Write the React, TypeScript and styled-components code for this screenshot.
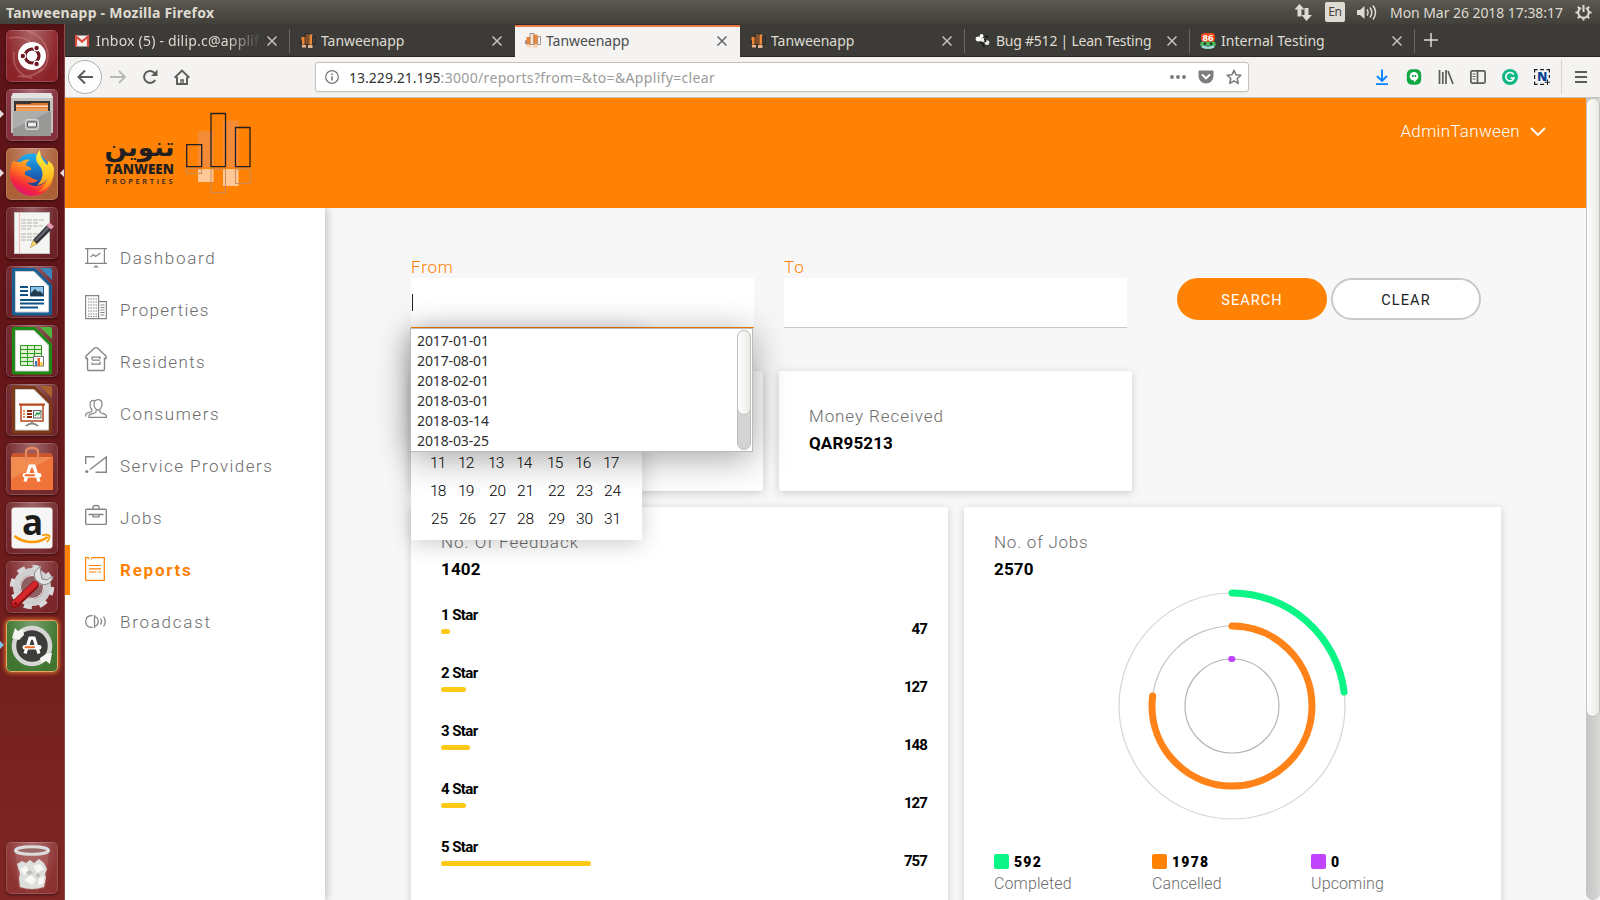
import React from 'react';
import styled, { createGlobalStyle, css } from 'styled-components';

const uiFont = '"Noto Sans", "Open Sans", sans-serif';
const pageFont = 'Roboto, "Liberation Sans", sans-serif';
const orange = '#ff8205';

const GlobalStyle = createGlobalStyle`
  * { box-sizing: border-box; }
  body { margin: 0; overflow: hidden; background: #f7f7f7; }
  svg { display: block; flex: none; }
`;

const Desktop = styled.div`
  width: 1600px;
  height: 900px;
  display: flex;
  flex-direction: column;
  overflow: hidden;
  font-family: ${uiFont};
`;

/* ---------- system panel ---------- */

const Panel = styled.div`
  height: 24px;
  flex: none;
  display: flex;
  align-items: center;
  padding: 0 8px 0 6px;
  background: linear-gradient(#5f5d52 0, #57554c 3px, #403f3a 24px);
  color: #dfdbd2;
  font-size: 14px;
  line-height: 23px;
  white-space: nowrap;
`;

const PanelTitle = styled.div`
  flex: 1;
  font-weight: 700;
  letter-spacing: 0.24px;
`;

const Indicators = styled.div`
  display: flex;
  align-items: center;
`;

const Keyboard = styled.div`
  width: 20px;
  height: 20px;
  margin: 0 12px;
  border-radius: 2px;
  background: #dfdbd2;
  color: #45443f;
  font-size: 12px;
  line-height: 20px;
  letter-spacing: -0.4px;
  text-align: center;
`;

const Clock = styled.div`
  width: 174px;
  margin: 0 11px 0 13px;
  letter-spacing: -0.06px;
`;

const Below = styled.div`
  flex: 1;
  display: flex;
  min-height: 0;
`;

/* ---------- launcher ---------- */

const LauncherBar = styled.div`
  width: 65px;
  flex: none;
  display: flex;
  flex-direction: column;
  align-items: flex-start;
  gap: 7px;
  padding: 6px 0 6px 6px;
  border-right: 1px solid #8d4a4b;
  background: linear-gradient(#4e1013 0, #5c1317 8px, #641518 35%, #74201f 75%, #7f2723 100%);
`;

const Tile = styled.div<{ $bg: string; $glow?: boolean; $last?: boolean }>`
  position: relative;
  width: 52px;
  height: 52px;
  flex: none;
  border-radius: 5px;
  background: radial-gradient(ellipse at 50% 0, rgba(255, 255, 255, 0.3), rgba(255, 255, 255, 0) 75%), ${p => p.$bg};
  box-shadow: inset 0 0 0 1px rgba(255, 255, 255, 0.16), 0 1px 3px rgba(0, 0, 0, 0.5);
  ${p => p.$glow && css`box-shadow: inset 0 0 0 1px #e8a868, 0 0 4px 1px #e07830;`}
  ${p => p.$last && css`margin-top: auto;`}
`;

const Pip = styled.i<{ $side: 'left' | 'right'; $color: string }>`
  position: absolute;
  top: 21px;
  ${p => (p.$side === 'left' ? 'left: -6px;' : 'right: -6px;')}
  border: 4.5px solid transparent;
  ${p => (p.$side === 'left'
    ? css`border-left-color: ${p.$color}; border-right-width: 0;`
    : css`border-right-color: ${p.$color}; border-left-width: 0;`)}
`;

const DocIcon = ({ edge, fold, children }: { edge: string; fold: string; children: React.ReactNode }) => (
  <svg width="52" height="52" viewBox="0 0 52 52">
    <path d="M8 2h21l17 17v28.500q0 2-2 2H8q-2 0-2-2V4q0-2 2-2z" fill={edge} />
    <path d="M9.500 5.500h18.500l14.500 14.500v26H9.500z" fill="#fff" stroke="#cfcfcf" />
    <path d="M34 2h10q2 0 2 2v10z" fill={fold} />
    {children}
  </svg>
);

const UbuntuIcon = () => (
  <svg width="52" height="52" viewBox="0 0 52 52" fill="none">
    <path d="M3 8c10-2 18 0 22 5M14 0c12 0 26 8 28 24M42 24c0 12-6 18-14 20M8 22c-2 12 4 24 18 26M36 38c-6 8-16 10-24 8" stroke="#d98d90" strokeOpacity=".45" strokeWidth="1.500" />
    <circle cx="26" cy="26" r="14" fill="#fff" />
    <circle cx="26" cy="26" r="7" stroke="#6b1a1f" strokeWidth="3.200" />
    <g fill="#6b1a1f" stroke="#fff" strokeWidth="1.200">
      <circle cx="16.800" cy="26" r="2.800" /><circle cx="30.600" cy="18" r="2.800" /><circle cx="30.600" cy="34" r="2.800" />
    </g>
  </svg>
);

const FilesIcon = () => (
  <svg width="52" height="52" viewBox="0 0 52 52">
    <path d="M7 4h38l2 4v36H5V8z" fill="#c2c2c1" />
    <path d="M7 4h38l2 5H5z" fill="#e3e3e2" />
    <rect x="8" y="12" width="36" height="11" fill="#3a3432" />
    <path d="M10 15h14l2-1h16v10H10z" fill="#e0772d" />
    <rect x="10" y="16.500" width="32" height="1.500" fill="#fbe3c8" />
    <rect x="10" y="19" width="32" height="4" fill="#f0a05c" />
    <path d="M7 22h38v25H7z" fill="#989897" />
    <path d="M7 22h38L7 40z" fill="#adadac" />
    <rect x="19.500" y="30.500" width="13" height="10" rx="2" fill="#b4b4b3" stroke="#d6d6d5" />
    <rect x="21.500" y="33" width="9" height="5" rx="1" fill="#eee" stroke="#444" />
  </svg>
);

const FirefoxIcon = () => (
  <svg width="52" height="52" viewBox="0 0 52 52">
    <defs>
      <linearGradient id="fxBody" x1=".8" y1="0" x2=".2" y2="1">
        <stop offset="0" stopColor="#ffd42e" /><stop offset=".45" stopColor="#ff7a1c" /><stop offset=".75" stopColor="#f5233f" /><stop offset="1" stopColor="#d6118e" />
      </linearGradient>
      <linearGradient id="fxGlobe" x1="0" y1="0" x2="0" y2="1">
        <stop offset="0" stopColor="#1fb0f2" /><stop offset="1" stopColor="#17348f" />
      </linearGradient>
      <linearGradient id="fxTail" x1=".5" y1="0" x2=".5" y2="1">
        <stop offset="0" stopColor="#fff44a" /><stop offset=".6" stopColor="#ffc21f" /><stop offset="1" stopColor="#ff7a1c" />
      </linearGradient>
    </defs>
    <circle cx="26" cy="23" r="17.500" fill="url(#fxGlobe)" />
    <path d="M7 13c-4 8-4.500 17 1 25 8 12 25 13 34 3 4-5 6-11 5-18-3 6-6 10-9 12-5 4-13 4-17-1 4 2 8 1 11-2-5 0-8-4-13-5-1-3 1-5 6-5 1-2-2-4-5-4 0-3 1-5 4-6-4-1-7 0-9 2-3 0-6 0-8-1z" fill="url(#fxBody)" />
    <path d="M34 2c-5 6-5 10-1 15 5 6 5 14-2 20 8-1 12-6 11-13-1 10-3 16-10 20 10-2 16-11 16-22 0-5-3-8-6-9 0 2 0 3-1 4-4-5-7-8-7-15z" fill="url(#fxTail)" />
  </svg>
);

const GeditIcon = () => (
  <svg width="52" height="52" viewBox="0 0 52 52">
    <rect x="8.500" y="5.500" width="35" height="41" fill="#f4f4f2" stroke="#c4c4c0" />
    <path d="M13.500 6v40" stroke="#f2b9b9" />
    <path d="M15 13h24M15 16h18M15 19h22M15 22h10M15 27h22M15 30h18M15 33h12" stroke="#b2b2b0" strokeWidth="1" strokeDasharray="5 1" />
    <path d="M24 41l3-8 15-16 5 4-16 16z" fill="#34343a" />
    <path d="M24 41l3-8 4 4z" fill="#efd26a" />
    <path d="M29 33l14-15 2 1.500-15 15z" fill="#6a6a72" />
    <path d="M40.500 18.500l3-3 4.500 4-3 3z" fill="#e79bb5" />
  </svg>
);

const WriterIcon = () => (
  <DocIcon edge="#185f96" fold="#3b86bb">
    <path d="M14 21h8M14 25h8M14 29h8M14 34h24M14 37.500h24M14 41.500h18" stroke="#0e5286" strokeWidth="2" />
    <rect x="24.500" y="20.500" width="13" height="9.500" fill="#8cc4e8" stroke="#23577e" />
    <path d="M25 30v-3l4-4 3 3 2-1 3 3v2z" fill="#1f3b4d" />
  </DocIcon>
);

const CalcIcon = () => (
  <DocIcon edge="#1d8a14" fold="#4fb53f">
    <rect x="14" y="20" width="22" height="21" fill="#dff3d4" />
    <path d="M14.500 20.500h21v20h-21zM14 24.500h22M14 28.500h22M14 32.500h22M14 36.500h22M21.500 20v21M28.500 20v21" stroke="#2c9a1b" fill="none" />
    <rect x="27.500" y="31.500" width="10" height="9.500" fill="#fff" stroke="#777" />
    <rect x="29" y="36" width="2" height="5" fill="#2f7fc2" /><rect x="31.500" y="33" width="2.500" height="8" fill="#e8642a" /><rect x="34.500" y="37" width="2" height="4" fill="#f0c020" />
  </DocIcon>
);

const ImpressIcon = () => (
  <DocIcon edge="#7c3a17" fold="#a8612f">
    <path d="M13 20.500h26" stroke="#b5481c" strokeWidth="2" />
    <rect x="15" y="21" width="22" height="16" fill="#fff" stroke="#b5481c" strokeWidth="1.500" />
    <path d="M17 27h2M17 30h2M17 33h2" stroke="#e88b5a" strokeWidth="2" />
    <path d="M21 27h5M21 30h5M21 33h5" stroke="#8c2e10" strokeWidth="2" />
    <rect x="27.500" y="26.500" width="7.500" height="7.500" fill="#f2f2f2" stroke="#666" />
    <path d="M29 32l2-3 1.500 1.500 2-3" stroke="#1d9a3c" fill="none" strokeWidth="1.300" />
    <path d="M20 42q6-5 12 0M26 37v3" stroke="#888" fill="none" strokeWidth="2" />
  </DocIcon>
);

const SoftwareMark = ({ x, y }: { x: number; y: number }) => (
  <g transform={`translate(${x} ${y})`}>
    <path d="M2.500 18.500L7.500 3.200h4l5 15.300" fill="none" stroke="#fff" strokeWidth="3.200" />
    <rect x="0" y="10" width="19" height="4.600" rx="2.300" fill="#fff" />
    <rect x="2" y="11.300" width="10.500" height="2" rx="1" fill="#ee6a2a" />
  </g>
);

const SoftwareIcon = () => (
  <svg width="52" height="52" viewBox="0 0 52 52">
    <path d="M20 18V9q0-4 6-4t6 4v9" fill="none" stroke="#d8694a" strokeWidth="2.500" />
    <path d="M5 13l2-3h38l2 3v4H5z" fill="#c9562c" />
    <path d="M5 14h42v33H5z" fill="#ee743a" />
    <path d="M5 14h42L5 36z" fill="#f28b50" />
    <path d="M20 19V9q0-4 6-4t6 4v10" fill="none" stroke="#e58a63" strokeWidth="2" />
    <SoftwareMark x={16.500} y={20} />
  </svg>
);

const AmazonLetter = styled.text`
  font: 700 35px/1 "Open Sans", sans-serif;
  fill: #1c1c1c;
`;

const AmazonIcon = () => (
  <svg width="52" height="52" viewBox="0 0 52 52" overflow="visible">
    <rect x="5.500" y="5.500" width="41" height="41" rx="3" fill="#f6f6f6" />
    <AmazonLetter x="16" y="32.500">a</AmazonLetter>
    <path d="M8.500 34c9 7.500 24 8 33 1" fill="none" stroke="#f90" strokeWidth="2.600" />
    <path d="M36 33.500c3-1 6-1 7 0s0 4-2 6.500" fill="none" stroke="#f90" strokeWidth="1.800" />
  </svg>
);

const SettingsIcon = () => (
  <svg width="52" height="52" viewBox="0 0 52 52">
    <circle cx="26" cy="26" r="15.500" fill="none" stroke="#cfcfcf" strokeWidth="7" />
    <circle cx="26" cy="26" r="20" fill="none" stroke="#d8d8d8" strokeWidth="4.500" strokeDasharray="8 7.708" />
    <circle cx="26" cy="26" r="11.500" fill="#8f6063" stroke="#eee" />
    <path d="M28 26l7-8" stroke="#a9a9a9" strokeWidth="7" />
    <path d="M34 6c-6 3-7 9-4 13l5 4c5 2 11-1 12-8l-6 4-5-1-1-5z" fill="#e2e2e2" stroke="#888" />
    <path d="M9 43l20-19" stroke="#8e1014" strokeWidth="8" strokeLinecap="round" />
    <path d="M9 42l20-19" stroke="#d3262b" strokeWidth="5.500" strokeLinecap="round" />
    <circle cx="9.500" cy="42.500" r="1.500" fill="#7a0b0e" />
  </svg>
);

const UpdaterIcon = () => (
  <svg width="52" height="52" viewBox="0 0 52 52">
    <circle cx="26" cy="26" r="18" fill="#3c3c3a" stroke="#d6d6d4" strokeWidth="4.500" />
    <path d="M6 18l3-10 3 3 5-2 1 6-5 5z" fill="#f4f4f2" />
    <path d="M46 33l-2 11-4-3-5 2-1-5 6-4z" fill="#f4f4f2" />
    <SoftwareMark x={16.500} y={15} />
  </svg>
);

const TrashIcon = () => (
  <svg width="52" height="52" viewBox="0 0 52 52">
    <path d="M9 10l4 36q13 4 26 0l4-36z" fill="#b5706e" fillOpacity=".4" />
    <path d="M11 22l5-3 4 2 4-3 4 3 5-4 5 4 3 6-2 5 1 4-2 9q-12 4-24 0l-1-9 1-4z" fill="#dededc" />
    <path d="M14 27l6-3 3 5-5 4zM27 24l7-2 4 5-7 4zM18 38l7-5 5 5-4 5zM33 36l5-2-1 8-5 1z" fill="#f8f8f7" />
    <path d="M20 30l4-2 3 3-4 2zM30 32l3-1 1 4-3 1z" fill="#bcbcba" />
    <ellipse cx="26" cy="8.500" rx="16.500" ry="3.800" fill="#9a6a69" stroke="#dcdcda" strokeWidth="3" />
  </svg>
);

const launcherItems: { icon: React.ReactNode; bg: string; left?: string; right?: string; glow?: boolean; last?: boolean }[] = [
  { icon: <UbuntuIcon />, bg: '#8b2429' },
  { icon: <FilesIcon />, bg: '#842f3c', left: '#e4dcdc' },
  { icon: <FirefoxIcon />, bg: '#ad5f38', left: '#e4dcdc', right: '#e4dcdc' },
  { icon: <GeditIcon />, bg: '#6d2026' },
  { icon: <WriterIcon />, bg: '#6c2228' },
  { icon: <CalcIcon />, bg: '#6c2228' },
  { icon: <ImpressIcon />, bg: '#6e2428' },
  { icon: <SoftwareIcon />, bg: '#74292c' },
  { icon: <AmazonIcon />, bg: '#74282c' },
  { icon: <SettingsIcon />, bg: '#7c262b' },
  { icon: <UpdaterIcon />, bg: '#3f7530', left: '#7cc4e8', glow: true },
  { icon: <TrashIcon />, bg: '#8c3231', last: true },
];

const Launcher = () => (
  <LauncherBar>
    {launcherItems.map((it, i) => (
      <Tile key={i} $bg={it.bg} $glow={it.glow} $last={it.last}>
        {it.icon}
        {it.left && <Pip $side="left" $color={it.left} />}
        {it.right && <Pip $side="right" $color={it.right} />}
      </Tile>
    ))}
  </LauncherBar>
);

/* ---------- browser chrome ---------- */

const Browser = styled.div`
  flex: 1;
  min-width: 0;
  display: flex;
  flex-direction: column;
`;

const TabStrip = styled.div`
  height: 33px;
  flex: none;
  display: flex;
  background: #3c3b37;
  border-bottom: 1px solid #262523;
`;

const TabBox = styled.div<{ $active?: boolean; $divider?: boolean }>`
  position: relative;
  width: 225px;
  height: 33px;
  flex: none;
  display: flex;
  align-items: center;
  padding: 0 12px 0 10px;
  color: #dfdbd2;
  font-size: 14px;
  line-height: 20px;
  ${p => p.$active && css`
    background: #f4f3f2;
    color: #4c4c4c;
    border-top: 1px solid #2b2a27;
    box-shadow: inset 0 2px #f07746;
  `}
  ${p => p.$divider && css`
    &::after {
      content: '';
      position: absolute;
      right: 0;
      top: 5px;
      width: 1px;
      height: 24px;
      background: #6b6965;
    }
  `}
`;

const TabTitle = styled.div<{ $tracking: number; $fade?: boolean }>`
  width: 164px;
  margin: 0 6px 0 5px;
  overflow: hidden;
  white-space: nowrap;
  letter-spacing: ${p => p.$tracking}px;
  ${p => p.$fade && css`mask-image: linear-gradient(to right, #000 130px, transparent 166px);`}
`;

const NewTab = styled.div`
  display: flex;
  align-items: center;
  padding: 0 0 1px 9px;
`;

const TabClose = () => (
  <svg width="12" height="12" viewBox="0 0 12 12" stroke="currentColor" strokeWidth="1.500" opacity=".85">
    <path d="M1.500 1.500l9 9M10.500 1.500l-9 9" />
  </svg>
);

const GmailIcon = () => (
  <svg width="16" height="16" viewBox="0 0 16 16">
    <rect x="0" y="2.500" width="14" height="11" rx="1" fill="#f3efee" />
    <path d="M1 13.500V3.500l6 5 6-5v10" fill="none" stroke="#dd4b3e" strokeWidth="2.200" />
  </svg>
);

const TanweenIcon = ({ dark }: { dark?: boolean }) => (
  <svg width="16" height="16" viewBox="0 0 16 16">
    <rect x="1.500" y="4" width="4" height="7.500" fill="#ee8432" />
    <rect x="5.500" y="1" width="2.500" height="10.500" fill={dark ? '#8a5029' : '#f9e3d2'} />
    <rect x="8.300" y="1.500" width="4" height="10" fill="#f08a38" />
    <path d="M.5 7.500h1v3.500h-1zM5 .5h4v11H5zM12.500 3.500h3v8h-3z" fill="none" stroke={dark ? '#2a2724' : '#8d8079'} strokeWidth=".8" />
    <path d="M2 12h4v2.500H2zM8 12h4.500v3H8z" fill={dark ? '#e3b48e' : '#f9d5b8'} />
  </svg>
);

const BeeIcon = () => (
  <svg width="16" height="16" viewBox="0 0 16 16">
    <ellipse cx="3.600" cy="6" rx="3" ry="2.400" fill="#fff" />
    <ellipse cx="6.600" cy="3" rx="1.900" ry="1.900" fill="#fff" />
    <ellipse cx="7.800" cy="7" rx="2" ry="2" fill="#f2f2f2" />
    <circle cx="12" cy="9.700" r="2.400" fill="#e8e8e8" />
    <path d="M5.500 9.500l3 2M10 4.500l3-1.500M8.500 12l.5 2M9.500 6l1.500 3" stroke="#151515" strokeWidth="1.500" />
  </svg>
);

const BadgeText = styled.text`
  font: 700 9.500px/1 "Open Sans", sans-serif;
  fill: #fff;
`;

const FrogIcon = () => (
  <svg width="16" height="16" viewBox="0 0 16 16" overflow="visible">
    <ellipse cx="8" cy="11.300" rx="7.800" ry="4.600" fill="#4fb85c" />
    <ellipse cx="8" cy="14" rx="6.500" ry="1.800" fill="#a5dce8" />
    <path d="M3.500 11.500q4.500 3.500 9 0" stroke="#1f6d34" fill="none" />
    <circle cx="5" cy="10.500" r="1.200" fill="#173d1f" /><circle cx="11" cy="10.500" r="1.200" fill="#173d1f" />
    <rect x="1" y="0" width="14" height="8.800" rx="3.500" fill="#ee4a1c" />
    <BadgeText x="2.500" y="8">86</BadgeText>
  </svg>
);

const tabs = [
  { title: 'Inbox (5) - dilip.c@applify', icon: <GmailIcon />, divider: true, tracking: 0.21, fade: true },
  { title: 'Tanweenapp', icon: <TanweenIcon dark />, tracking: -0.04 },
  { title: 'Tanweenapp', icon: <TanweenIcon />, active: true, tracking: -0.04 },
  { title: 'Tanweenapp', icon: <TanweenIcon dark />, divider: true, tracking: -0.04 },
  { title: 'Bug #512 | Lean Testing', icon: <BeeIcon />, divider: true, tracking: -0.24 },
  { title: 'Internal Testing', icon: <FrogIcon />, divider: true, tracking: 0.03 },
];

const NavBar = styled.div`
  height: 41px;
  flex: none;
  display: flex;
  align-items: center;
  padding: 0 11px 0 3px;
  background: #f4f3f2;
  border-bottom: 1px solid #c6c3bd;
  color: #5c5c5a;
`;

const BackButton = styled.div`
  width: 34px;
  height: 34px;
  display: grid;
  place-items: center;
  border: 1px solid #b0aeaa;
  border-radius: 50%;
  background: #fdfdfd;
`;

const NavGroup = styled.div`
  display: flex;
  align-items: center;
  gap: 16px;
  margin-left: 8px;
  width: 205px;
`;

const AddressBar = styled.div`
  width: 934px;
  height: 30px;
  display: flex;
  align-items: center;
  padding: 0 6px 0 9px;
  border: 1px solid #c4c1bb;
  border-radius: 3px;
  background: #fff;
  box-shadow: 0 1px 2px rgba(0, 0, 0, 0.06);
`;

const Url = styled.div`
  flex: 1;
  margin: 1px 0 0 10px;
  font-size: 14px;
  line-height: 20px;
  color: #9b9b99;
  letter-spacing: 0.33px;
  white-space: nowrap;
`;

const Host = styled.span`
  color: #333;
  letter-spacing: 0.02px;
`;

const AddressActions = styled.div`
  display: flex;
  align-items: center;
  gap: 12px;
`;

const Extensions = styled.div`
  display: flex;
  align-items: center;
  gap: 16px;
  margin-left: auto;
`;

const Divider = styled.i`
  width: 1px;
  height: 34px;
  margin: 0 11px;
  background: #d4d2ce;
`;

const GlyphText = styled.text<{ $size: number; $fill: string }>`
  font: 800 ${p => p.$size}px/1 "Open Sans", sans-serif;
  fill: ${p => p.$fill};
`;

const Toolbar = () => (
  <NavBar>
    <BackButton>
      <svg width="18" height="16" viewBox="0 0 18 16" fill="none" stroke="#5a5a58" strokeWidth="2"><path d="M9 1.500L2.500 8 9 14.500M2.500 8H17" /></svg>
    </BackButton>
    <NavGroup>
      <svg width="16" height="16" viewBox="0 0 16 16" fill="none" stroke="#b9b8b6" strokeWidth="1.800"><path d="M9 2l6 6-6 6M15 8H0" /></svg>
      <svg width="16" height="16" viewBox="0 0 16 16" fill="none" stroke="#5c5c5a" strokeWidth="2"><path d="M13.200 11A6 6 0 1 1 13 4.500" /><path d="M15.500 .500v6.500H9z" fill="#5c5c5a" stroke="none" /></svg>
      <svg width="16" height="16" viewBox="0 0 16 16" fill="none" stroke="#5c5c5a" strokeWidth="1.900"><path d="M.7 8.800L8 1.600l7.300 7.200M3 8v7h10V8" /><path d="M7 15v-4h2.200v4" strokeWidth="1.300" /></svg>
    </NavGroup>
    <AddressBar>
      <svg width="14" height="14" viewBox="0 0 14 14" fill="none" stroke="#777" strokeWidth="1.200"><circle cx="7" cy="7" r="6.300" /><path d="M7 6.200v4.300M7 3.500v1.500" strokeWidth="1.600" /></svg>
      <Url><Host>13.229.21.195</Host>:3000/reports?from=&amp;to=&amp;Applify=clear</Url>
      <AddressActions>
        <svg width="16" height="16" viewBox="0 0 16 16" fill="#777"><circle cx="2" cy="8" r="1.900" /><circle cx="8" cy="8" r="1.900" /><circle cx="14" cy="8" r="1.900" /></svg>
        <svg width="16" height="16" viewBox="0 0 16 16"><path d="M1.500 1.500h13q1 0 1 1V7a7.500 7.500 0 0 1-15 0V2.500q0-1 1-1z" fill="#7d7d7b" /><path d="M4.500 6L8 9.300 11.500 6" fill="none" stroke="#fff" strokeWidth="2" strokeLinecap="round" /></svg>
        <svg width="16" height="16" viewBox="0 0 16 16"><path d="M8 1.200l2 4.500 4.900.5-3.700 3.300 1.100 4.900L8 11.900l-4.300 2.500 1.100-4.900L1.100 6.200 6 5.700z" fill="none" stroke="#777" strokeWidth="1.500" strokeLinejoin="round" /></svg>
      </AddressActions>
    </AddressBar>
    <Extensions>
      <svg width="16" height="16" viewBox="0 0 16 16" fill="none" stroke="#0a84ff" strokeWidth="1.900"><path d="M8 .5v11M3 7l5 5 5-5M2 15.200h12" /></svg>
      <svg width="16" height="16" viewBox="0 0 16 16"><rect x=".8" y=".3" width="14.400" height="15.400" rx="5" fill="#10a843" /><circle cx="8" cy="7.300" r="4.300" fill="#fff" /><path d="M8 10.500h3l-3 3z" fill="#fff" /><path d="M6 6h1.600v2H6zM8.600 6h1.600v2H8.600z" fill="#10a843" /></svg>
      <svg width="16" height="16" viewBox="0 0 16 16" fill="none" stroke="#5c5c5a" strokeWidth="1.700"><path d="M1.500 1v14M4.800 3v12M8 1v14M10 2l5 13" /></svg>
      <svg width="16" height="16" viewBox="0 0 16 16" fill="none" stroke="#5c5c5a" strokeWidth="1.700"><rect x=".9" y="1.900" width="14.200" height="12.200" rx="1.500" /><path d="M7.500 2v12" /><path d="M2.500 5h3M2.500 7.500h3M2.500 10h3" strokeWidth="1" /></svg>
      <svg width="16" height="16" viewBox="0 0 16 16" fill="none"><circle cx="8" cy="8" r="8" fill="#11b886" /><path d="M11.700 5.700A4.200 4.200 0 1 0 12 9H8.500" stroke="#fff" strokeWidth="1.600" /></svg>
      <svg width="16" height="16" viewBox="0 0 16 16" fill="none"><path d="M.6 3.500V.6h3M6 .6h4M12.500 .6h2.900v3M15.400 6v3M.6 6v4M.6 12.500v2.900h3M6 15.400h4" stroke="#222" strokeWidth="1.200" /><GlyphText $size={12} $fill="#063f94" x="3.200" y="12.300">N</GlyphText><path d="M13.500 10.500v5.500M10.700 13.200h5.300" stroke="#222" strokeWidth="1.100" /></svg>
    </Extensions>
    <Divider />
    <svg width="16" height="16" viewBox="0 0 16 16" stroke="#5c5c5a" strokeWidth="1.900"><path d="M2 3h12M2 8h12M2 13h12" /></svg>
  </NavBar>
);

/* ---------- web page ---------- */

const Viewport = styled.div`
  flex: 1;
  display: flex;
  min-height: 0;
`;

const Page = styled.div`
  flex: 1;
  min-width: 0;
  display: flex;
  flex-direction: column;
  background: #f7f7f7;
  font-family: ${pageFont};
  overflow: hidden;
`;

const PageScroll = styled.div`
  width: 14px;
  flex: none;
  background: linear-gradient(to right, #c6c5c3, #d8d8d7);
  border-radius: 0 0 7px 7px;
`;

const PageThumb = styled.div`
  height: 619px;
  border: 1px solid #c3c1bc;
  border-radius: 7px;
  background: linear-gradient(to right, #fefefe, #e9e8e6);
`;

const Header = styled.header`
  position: relative;
  z-index: 1;
  height: 110px;
  flex: none;
  display: flex;
  justify-content: space-between;
  align-items: flex-start;
  padding: 12px 40px 0 39px;
  background: ${orange};
`;

const Account = styled.div`
  display: flex;
  align-items: center;
  gap: 10px;
  margin-top: 10px;
  color: #fff;
  font-size: 17px;
  font-weight: 300;
  line-height: 22px;
  letter-spacing: 0.32px;
`;

const LogoArabic = styled.text`
  font: 700 26px/1 "DejaVu Sans", sans-serif;
  fill: #231f20;
`;
const LogoName = styled.text`
  font: 800 14px/1 "Open Sans", sans-serif;
  fill: #231f20;
`;
const LogoSub = styled.text`
  font: 600 7.500px/1 "Open Sans", sans-serif;
  letter-spacing: 2.650px;
  fill: #231f20;
`;

const Logo = () => (
  <svg width="150" height="86" viewBox="104 110 150 86">
    <LogoArabic x="104.500" y="155.500" textLength="70" lengthAdjust="spacingAndGlyphs" direction="ltr">تنوين</LogoArabic>
    <LogoName x="105" y="173.800" textLength="69" lengthAdjust="spacingAndGlyphs">TANWEEN</LogoName>
    <LogoSub x="105" y="183.800">PROPERTIES</LogoSub>
    <g fill="#f68b37">
      <rect x="198" y="131" width="15.500" height="36" /><rect x="223" y="120.500" width="15.500" height="46.500" />
    </g>
    <g fill="#ffc896">
      <rect x="198" y="169" width="15.500" height="13" /><rect x="223" y="169" width="15.500" height="17" />
    </g>
    <path d="M186.600 169h15v4.500h-15zM211 169h14.500v23.500H211zM235.500 169h14.500v14.500h-14.500z" fill="none" stroke="#c98d5c" strokeWidth="1" />
    <path d="M186.700 144.700h15v22h-15zM211 113.500h14.500v53.200H211zM235.500 127.500h14.500v39.200h-14.500z" fill="none" stroke="#231f20" strokeWidth="1.300" />
  </svg>
);

const Body = styled.div`
  flex: 1;
  display: flex;
  min-height: 0;
`;

const Sidebar = styled.nav`
  width: 260px;
  flex: none;
  padding-top: 24px;
  background: #fff;
  box-shadow: 2px 0 8px rgba(0, 0, 0, 0.22);
`;

const NavItem = styled.div<{ $active?: boolean; $tracking: number }>`
  display: flex;
  align-items: center;
  gap: 13px;
  height: 50px;
  margin: 1px 0 2px;
  padding-left: 20px;
  color: ${p => (p.$active ? orange : '#6c6c6c')};
  font-size: 17px;
  font-weight: ${p => (p.$active ? 700 : 300)};
  line-height: 20px;
  letter-spacing: ${p => p.$tracking}px;
  svg { color: ${p => (p.$active ? orange : '#858585')}; }
  ${p => p.$active && css`
    padding-left: 15px;
    border-left: 5px solid ${orange};
  `}
`;

const icon = (children: React.ReactNode) => (
  <svg width="22" height="32" viewBox="0 0 22 32" fill="none" stroke="currentColor" strokeWidth="1.200">{children}</svg>
);

const nav = [
  { label: 'Dashboard', tracking: 1.66, art: icon(<><path d="M0 6.600h22M0 21.400h22M2.600 7v14M19.400 7v14M5.500 15l3-2.500 2 2 5-3.500" /><path d="M8 25.400h6l-3-2.400z" fill="currentColor" stroke="none" /></>) },
  { label: 'Properties', tracking: 1.3, art: icon(<><path d="M.6 1.600h13v23H.6zM13.600 7.600h7.800v17h-7.800" /><path d="M3 5h9M3 8h9M3 11h9M3 14h9M3 17h9M3 20h9M3 22.500h9" strokeDasharray="1.500 1" /><path d="M15.500 11h4M15.500 13.500h4M15.500 16h4M15.500 18.500h4M15.500 21h4" /></>) },
  { label: 'Residents', tracking: 1.38, art: icon(<><path d="M11 1.600q-1 0-2 1L1 10v2.500h1.500V23q0 1.500 1.500 1.500h14q1.500 0 1.500-1.500V12.500H21V10l-8-7.400q-1-1-2-1z" strokeWidth="1.400" /><path d="M7 13.500v-2.400h8v1.800M15 15.500v2.700H7v-1.700M7 14.200h8" strokeWidth="1.300" /></>) },
  { label: 'Consumers', tracking: 1.56, art: icon(<><path d="M13 1.600c2.500 0 4 2 4 4.500s-1.500 6-4 6-4-3.500-4-6 1.500-4.500 4-4.500zM11 12v2c-1 2-7 1.500-7 4v1.400h17.400V18c0-2.500-5.500-2-6.500-4v-2M10 2.800C7 1.600 5 3.500 5 6.500c0 2 .5 4 2 5v1.500c-1 2-6.400 1.500-6.400 4v1.500" /></>) },
  { label: 'Service Providers', tracking: 1.46, art: icon(<><path d="M.7 14V6.700h9M5 19.500L21.300 7v15.300H10.500" strokeWidth="1.400" /><circle cx="1.800" cy="21.500" r="1.600" fill="currentColor" stroke="none" /></>) },
  { label: 'Jobs', tracking: 1.6, art: icon(<><rect x=".7" y="7.200" width="20.600" height="15.200" rx="1" strokeWidth="1.400" /><path d="M8 7V5q0-1.500 3-1.500T14 5v2M3.500 12.500h15M8 12.500v2.300h6v-2.300" strokeWidth="1.300" /></>) },
  { label: 'Reports', tracking: 1.75, active: true, art: icon(<><path d="M4 3.700H.7v22.600h18.600V3.700H6.500" /><path d="M4 11.500h12M4 14.800h12M4 18h7.500M13 18h3" /><path d="M4 3.700v2M6.500 3.700v2" strokeWidth=".8" /></>) },
  { label: 'Broadcast', tracking: 1.74, art: icon(<><path d="M7.500 9.500C3 9.500.7 12 .7 15.500s2.300 6 6.800 6M9.500 9v13M9.500 10.500c5 1.500 5 8.500 0 10M15.500 12.500q2 3 0 6M18.500 10.500q3.500 5 0 10" strokeWidth="1.300" /></>) },
];

const Main = styled.main`
  flex: 1;
  min-width: 0;
  padding: 49px 85px 0 86px;
`;

const Filters = styled.div`
  display: flex;
  align-items: flex-start;
`;

const Field = styled.div`
  position: relative;
  width: 343px;
  margin-right: 30px;
`;

const FieldLabel = styled.div`
  height: 21px;
  color: ${orange};
  font-size: 17px;
  font-weight: 300;
  line-height: 20px;
  letter-spacing: 0.8px;
`;

const Input = styled.div<{ $focus?: boolean }>`
  display: flex;
  align-items: center;
  height: 50px;
  padding-left: 1px;
  background: #fff;
  border-bottom: 1px solid ${p => (p.$focus ? orange : '#c9c9c9')};
`;

const Caret = styled.i`
  width: 1px;
  height: 17px;
  background: #222;
`;

const Calendar = styled.div`
  position: absolute;
  z-index: 1;
  top: 71px;
  left: 0;
  width: 231px;
  height: 212px;
  display: grid;
  grid-template-columns: 28px 30px 28px 31px 28px 28px 28px;
  grid-auto-rows: 28px;
  align-content: end;
  padding: 0 0 7px 20px;
  border-radius: 2px;
  background: #fff;
  box-shadow: 0 4px 22px rgba(0, 0, 0, 0.2);
  color: #000;
  font-size: 15.500px;
  font-weight: 300;
  line-height: 28px;
`;

/* Days starting with a 1 are set tighter, like the narrow figure one of the date picker. */
const Day = styled.span<{ $tight: boolean }>`
  ${p => p.$tight && css`
    margin-left: -1px;
    letter-spacing: -0.8px;
  `}
`;

const Suggestions = styled.div`
  position: absolute;
  z-index: 2;
  top: 71px;
  left: -1px;
  width: 343px;
  height: 124px;
  display: flex;
  justify-content: space-between;
  padding: 1px 1px 0 6px;
  border: 1px solid #bdbbb6;
  background: #fff;
  box-shadow: 0 6px 34px rgba(0, 0, 0, 0.36);
`;

const SuggestionList = styled.div`
  padding-top: 1px;
  font: 14px/20px ${uiFont};
  letter-spacing: -0.13px;
  color: #2e2e2e;
`;

const ListScroll = styled.div`
  width: 14px;
  height: 120px;
  border: 1px solid #bdbcba;
  border-radius: 7px;
  background: #d4d4d3;
`;

const ListThumb = styled.div`
  height: 85px;
  margin: -1px;
  border: 1px solid #c3c1bc;
  border-radius: 7px;
  background: linear-gradient(to right, #fefefe, #ecebe9);
`;

const Buttons = styled.div`
  display: flex;
  gap: 4px;
  margin: 21px 0 0 20px;
`;

const Button = styled.button<{ $primary?: boolean }>`
  width: 150px;
  height: 42px;
  padding: 2px 0 0;
  border: 2px solid ${p => (p.$primary ? orange : '#c9c9c9')};
  border-radius: 21px;
  background: ${p => (p.$primary ? orange : '#fff')};
  color: ${p => (p.$primary ? '#fff' : '#222')};
  font: 14.500px ${pageFont};
  letter-spacing: 1.100px;
`;

const CardRow = styled.div<{ $top: number }>`
  display: flex;
  gap: 16px;
  margin-top: ${p => p.$top}px;
`;

const Card = styled.section<{ $width: number; $height: number; $padTop: number }>`
  width: ${p => p.$width}px;
  height: ${p => p.$height}px;
  flex: none;
  padding: ${p => p.$padTop}px 20px 0 30px;
  border-radius: 2px;
  background: #fff;
  box-shadow: 0 2px 8px rgba(0, 0, 0, 0.17);
`;

const CardTitle = styled.div<{ $tracking: number }>`
  color: #6c6c6c;
  font-size: 17px;
  font-weight: 300;
  line-height: 27px;
  letter-spacing: ${p => p.$tracking}px;
`;

const CardValue = styled.div`
  color: #000;
  font-size: 17px;
  font-weight: 700;
  line-height: 27px;
  letter-spacing: 0.15px;
`;

const Ratings = styled.div`
  margin-top: 22px;
`;

const Rating = styled.div`
  display: flex;
  justify-content: space-between;
  height: 58px;
  font-size: 15px;
  font-weight: 700;
  line-height: 20px;
  letter-spacing: -0.6px;
  color: #000;
`;

const Bar = styled.div`
  height: 5px;
  margin-top: 4px;
  border-radius: 3px;
  background: #fcc917;
`;

const Count = styled.div`
  padding: 14px 1px 0 0;
  letter-spacing: -0.9px;
`;

const Chart = styled.div`
  display: flex;
  justify-content: center;
  margin: 3px 0 26px -11px;
`;

const Legend = styled.div`
  display: grid;
  grid-template-columns: 158px 159px 158px;
`;

const LegendHead = styled.div`
  display: flex;
  align-items: center;
  gap: 5px;
  height: 20px;
  color: #000;
  font-size: 14px;
  font-weight: 900;
  letter-spacing: 1.200px;
`;

const Swatch = styled.i<{ $color: string }>`
  width: 15px;
  height: 15px;
  margin-top: -1px;
  border-radius: 2px;
  background: ${p => p.$color};
`;

const LegendLabel = styled.div`
  color: #6c6c6c;
  font-size: 16px;
  font-weight: 300;
  line-height: 23px;
  letter-spacing: 0.12px;
`;

const days = [11, 12, 13, 14, 15, 16, 17, 18, 19, 20, 21, 22, 23, 24, 25, 26, 27, 28, 29, 30, 31];
const dates = ['2017-01-01', '2017-08-01', '2018-02-01', '2018-03-01', '2018-03-14', '2018-03-25'];
const ratings = [
  { label: '1 Star', count: 47, bar: 9 },
  { label: '2 Star', count: 127, bar: 25 },
  { label: '3 Star', count: 148, bar: 29 },
  { label: '4 Star', count: 127, bar: 25 },
  { label: '5 Star', count: 757, bar: 150 },
];
const jobs = [
  { label: 'Completed', count: 592, color: '#0bf586', arc: '#0bf586', ring: 113, track: '#d6d6d6', part: 0.23 },
  { label: 'Cancelled', count: 1978, color: orange, arc: '#ff8318', ring: 80, track: '#c4c4c4', part: 0.77 },
  { label: 'Upcoming', count: 0, color: '#c044fb', arc: '#c044fb', ring: 47, track: '#b4b4b4', part: 0.004 },
];

const JobsChart = () => (
  <svg width="240" height="240" viewBox="-120 -120 240 240" fill="none">
    {jobs.map(j => (
      <g key={j.label}>
        <circle r={j.ring} stroke={j.track} strokeWidth="1.200" />
        <circle
          r={j.ring}
          stroke={j.arc}
          strokeWidth={j.count ? 7 : 6}
          strokeLinecap="round"
          pathLength={1}
          strokeDasharray={`${j.part} 2`}
          transform={j.count ? 'rotate(-90)' : 'rotate(-91)'}
        />
      </g>
    ))}
  </svg>
);

export default function App() {
  return (
    <Desktop>
      <GlobalStyle />
      <Panel>
        <PanelTitle>Tanweenapp - Mozilla Firefox</PanelTitle>
        <Indicators>
          <svg width="20" height="20" viewBox="0 0 20 20" fill="#dfdbd2"><path d="M6.500 2l5 5.500H8.500v7h-4v-7H1.500z" /><path d="M13.500 19l-5-6h3V6h4v7h3.500z" /></svg>
          <Keyboard>En</Keyboard>
          <svg width="20" height="20" viewBox="0 0 20 20" fill="none" stroke="#dfdbd2" strokeWidth="1.500"><path d="M0 8h3l4.500-4v13L3 13H0z" fill="#dfdbd2" stroke="none" /><path d="M10 7.500q2 3 0 6M13 5.500q3.500 5 0 10M16 3.500q5 7 0 14" /></svg>
          <Clock>Mon Mar 26 2018 17:38:17</Clock>
          <svg width="17" height="17" viewBox="0 0 17 17" fill="none" stroke="#dfdbd2" strokeWidth="2"><path d="M6 3.800a5.300 5.300 0 1 0 5 0M8.500 1v7" /><path d="M.5 8.500h2.500M14 8.500h2.500M2.800 2.800l1.800 1.800M14.200 2.800l-1.800 1.800M2.800 14.200l1.800-1.800M14.200 14.200l-1.800-1.800M8.500 14v2.500" /></svg>
        </Indicators>
      </Panel>
      <Below>
        <Launcher />
        <Browser>
          <TabStrip>
            {tabs.map((t, i) => (
              <TabBox key={i} $active={t.active} $divider={t.divider}>
                {t.icon}
                <TabTitle $tracking={t.tracking} $fade={t.fade}>{t.title}</TabTitle>
                <TabClose />
              </TabBox>
            ))}
            <NewTab>
              <svg width="14" height="14" viewBox="0 0 14 14" stroke="#dfdbd2" strokeWidth="1.500"><path d="M7 0v14M0 7h14" /></svg>
            </NewTab>
          </TabStrip>
          <Toolbar />
          <Viewport>
            <Page>
              <Header>
                <Logo />
                <Account>
                  AdminTanween
                  <svg width="16" height="10" viewBox="0 0 16 10" fill="none" stroke="#fff" strokeWidth="1.800"><path d="M1 2l7 7 7-7" /></svg>
                </Account>
              </Header>
              <Body>
                <Sidebar>
                  {nav.map(n => (
                    <NavItem key={n.label} $active={n.active} $tracking={n.tracking}>
                      {n.art}
                      {n.label}
                    </NavItem>
                  ))}
                </Sidebar>
                <Main>
                  <Filters>
                    <Field>
                      <FieldLabel>From</FieldLabel>
                      <Input $focus><Caret /></Input>
                      <Calendar>{days.map(d => <Day key={d} $tight={d < 20}>{d}</Day>)}</Calendar>
                      <Suggestions>
                        <SuggestionList>{dates.map(d => <div key={d}>{d}</div>)}</SuggestionList>
                        <ListScroll><ListThumb /></ListScroll>
                      </Suggestions>
                    </Field>
                    <Field>
                      <FieldLabel>To</FieldLabel>
                      <Input />
                    </Field>
                    <Buttons>
                      <Button $primary>SEARCH</Button>
                      <Button>CLEAR</Button>
                    </Buttons>
                  </Filters>
                  <CardRow $top={43}>
                    <Card $width={352} $height={120} $padTop={32} />
                    <Card $width={353} $height={120} $padTop={32}>
                      <CardTitle $tracking={0.93}>Money Received</CardTitle>
                      <CardValue>QAR95213</CardValue>
                    </Card>
                  </CardRow>
                  <CardRow $top={16}>
                    <Card $width={537} $height={480} $padTop={22}>
                      <CardTitle $tracking={0.99}>No. Of Feedback</CardTitle>
                      <CardValue>1402</CardValue>
                      <Ratings>
                        {ratings.map(r => (
                          <Rating key={r.label}>
                            <div>
                              {r.label}
                              <Bar style={{ width: r.bar }} />
                            </div>
                            <Count>{r.count}</Count>
                          </Rating>
                        ))}
                      </Ratings>
                    </Card>
                    <Card $width={537} $height={480} $padTop={22}>
                      <CardTitle $tracking={0.76}>No. of Jobs</CardTitle>
                      <CardValue>2570</CardValue>
                      <Chart><JobsChart /></Chart>
                      <Legend>
                        {jobs.map(j => (
                          <div key={j.label}>
                            <LegendHead><Swatch $color={j.color} />{j.count}</LegendHead>
                            <LegendLabel>{j.label}</LegendLabel>
                          </div>
                        ))}
                      </Legend>
                    </Card>
                  </CardRow>
                </Main>
              </Body>
            </Page>
            <PageScroll><PageThumb /></PageScroll>
          </Viewport>
        </Browser>
      </Below>
    </Desktop>
  );
}
